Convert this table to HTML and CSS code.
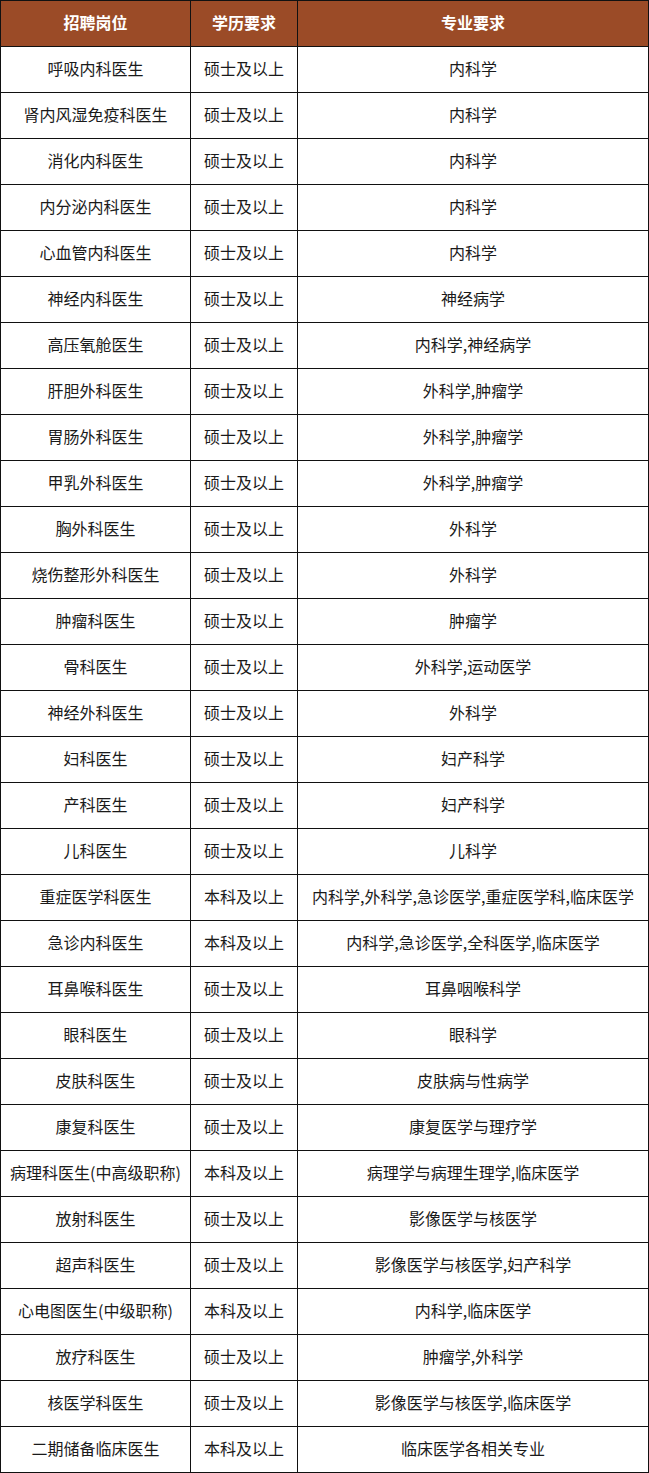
FILE: index.html
```html
<!DOCTYPE html>
<html lang="zh-CN">
<head>
<meta charset="utf-8">
<title>招聘岗位</title>
<link rel="stylesheet" href="styles.css">
</head>
<body>
<table class="jobs">
  <colgroup>
    <col class="c1"><col class="c2"><col class="c3">
  </colgroup>
  <thead>
    <tr><th>招聘岗位</th><th>学历要求</th><th>专业要求</th></tr>
  </thead>
  <tbody>
    <tr><td>呼吸内科医生</td><td>硕士及以上</td><td>内科学</td></tr>
    <tr><td>肾内风湿免疫科医生</td><td>硕士及以上</td><td>内科学</td></tr>
    <tr><td>消化内科医生</td><td>硕士及以上</td><td>内科学</td></tr>
    <tr><td>内分泌内科医生</td><td>硕士及以上</td><td>内科学</td></tr>
    <tr><td>心血管内科医生</td><td>硕士及以上</td><td>内科学</td></tr>
    <tr><td>神经内科医生</td><td>硕士及以上</td><td>神经病学</td></tr>
    <tr><td>高压氧舱医生</td><td>硕士及以上</td><td>内科学,神经病学</td></tr>
    <tr><td>肝胆外科医生</td><td>硕士及以上</td><td>外科学,肿瘤学</td></tr>
    <tr><td>胃肠外科医生</td><td>硕士及以上</td><td>外科学,肿瘤学</td></tr>
    <tr><td>甲乳外科医生</td><td>硕士及以上</td><td>外科学,肿瘤学</td></tr>
    <tr><td>胸外科医生</td><td>硕士及以上</td><td>外科学</td></tr>
    <tr><td>烧伤整形外科医生</td><td>硕士及以上</td><td>外科学</td></tr>
    <tr><td>肿瘤科医生</td><td>硕士及以上</td><td>肿瘤学</td></tr>
    <tr><td>骨科医生</td><td>硕士及以上</td><td>外科学,运动医学</td></tr>
    <tr><td>神经外科医生</td><td>硕士及以上</td><td>外科学</td></tr>
    <tr><td>妇科医生</td><td>硕士及以上</td><td>妇产科学</td></tr>
    <tr><td>产科医生</td><td>硕士及以上</td><td>妇产科学</td></tr>
    <tr><td>儿科医生</td><td>硕士及以上</td><td>儿科学</td></tr>
    <tr><td>重症医学科医生</td><td>本科及以上</td><td>内科学,外科学,急诊医学,重症医学科,临床医学</td></tr>
    <tr><td>急诊内科医生</td><td>本科及以上</td><td>内科学,急诊医学,全科医学,临床医学</td></tr>
    <tr><td>耳鼻喉科医生</td><td>硕士及以上</td><td>耳鼻咽喉科学</td></tr>
    <tr><td>眼科医生</td><td>硕士及以上</td><td>眼科学</td></tr>
    <tr><td>皮肤科医生</td><td>硕士及以上</td><td>皮肤病与性病学</td></tr>
    <tr><td>康复科医生</td><td>硕士及以上</td><td>康复医学与理疗学</td></tr>
    <tr><td>病理科医生(中高级职称)</td><td>本科及以上</td><td>病理学与病理生理学,临床医学</td></tr>
    <tr><td>放射科医生</td><td>硕士及以上</td><td>影像医学与核医学</td></tr>
    <tr><td>超声科医生</td><td>硕士及以上</td><td>影像医学与核医学,妇产科学</td></tr>
    <tr><td>心电图医生(中级职称)</td><td>本科及以上</td><td>内科学,临床医学</td></tr>
    <tr><td>放疗科医生</td><td>硕士及以上</td><td>肿瘤学,外科学</td></tr>
    <tr><td>核医学科医生</td><td>硕士及以上</td><td>影像医学与核医学,临床医学</td></tr>
    <tr><td>二期储备临床医生</td><td>本科及以上</td><td>临床医学各相关专业</td></tr>
  </tbody>
</table>
</body>
</html>
```
FILE: styles.css
```css
html, body {
  margin: 0;
  padding: 0;
  background: #ffffff;
}
body {
  font-family: "Noto Sans CJK SC", "Noto Sans", "Liberation Sans", sans-serif;
  font-size: 16px;
  color: #1a1a1a;
}
.jobs {
  border-collapse: collapse;
  table-layout: fixed;
  width: 648px;
}
.c1 { width: 190px; }
.c2 { width: 107px; }
.c3 { width: 351px; }
.jobs tr {
  height: 46px;
}
.jobs th,
.jobs td {
  border: 1px solid #111111;
  padding: 0 0 3px 0;
  text-align: center;
  vertical-align: middle;
  line-height: 20px;
  white-space: nowrap;
}
.jobs th {
  background: #9b4b27;
  color: #ffffff;
  font-weight: 700;
}
```
